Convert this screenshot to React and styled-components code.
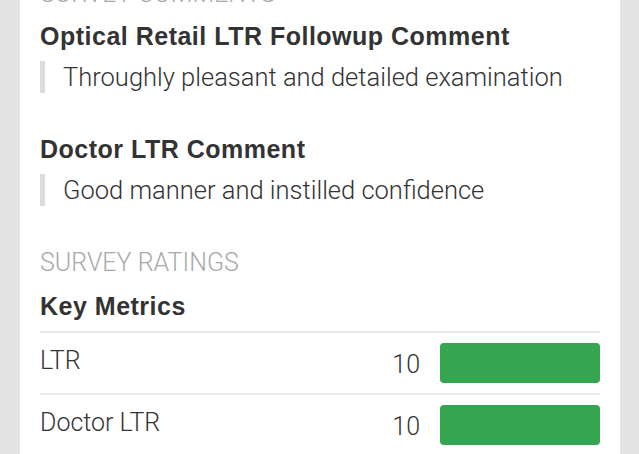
import React from "react";
import styled, { createGlobalStyle } from "styled-components";

const comments = [
  { title: "Optical Retail LTR Followup Comment", text: "Throughly pleasant and detailed examination" },
  { title: "Doctor LTR Comment", text: "Good manner and instilled confidence" },
];

const metrics = [
  { label: "LTR", value: 10, max: 10 },
  { label: "Doctor LTR", value: 10, max: 10 },
];

export default function App() {
  return (
    <Page>
      <GlobalStyle />
      <Card>
        <SectionLabel>Survey Comments</SectionLabel>
        {comments.map((c) => (
          <Comment key={c.title}>
            <Heading>{c.title}</Heading>
            <Quote>{c.text}</Quote>
          </Comment>
        ))}
        <SectionLabel $spaced>Survey Ratings</SectionLabel>
        <Heading $gap={13}>Key Metrics</Heading>
        <MetricList>
          {metrics.map((m) => (
            <MetricRow key={m.label}>
              <MetricLabel>{m.label}</MetricLabel>
              <MetricValue>{m.value}</MetricValue>
              <BarTrack>
                <Bar style={{ width: `${(m.value / m.max) * 100}%` }} />
              </BarTrack>
            </MetricRow>
          ))}
        </MetricList>
      </Card>
    </Page>
  );
}

const GlobalStyle = createGlobalStyle`
  html, body {
    margin: 0;
    background: #e3e3e3;
    overflow: hidden;
  }
`;

const Page = styled.div`
  display: flow-root;
  padding: 0 19px 0 20px;
  height: 454px;
  overflow: hidden;
`;

const Card = styled.div`
  background: #fff;
  margin-top: -21px;
  padding: 0 20px 40px;
  min-height: 100%;
  color: #333;
`;

const SectionLabel = styled.div`
  font-family: Roboto, "Liberation Sans", sans-serif;
  font-weight: 300;
  font-size: 25px;
  line-height: 30px;
  text-transform: uppercase;
  color: #a9a9a9;
  margin-top: ${(p) => (p.$spaced ? "42px" : "0")};
`;

const Comment = styled.div`
  margin-top: 12px;
  & + & {
    margin-top: 41px;
  }
`;

const Heading = styled.h3`
  margin: ${(p) => p.$gap || 0}px 0 0;
  font-family: "Liberation Sans", Arial, sans-serif;
  font-weight: 700;
  font-size: 25px;
  letter-spacing: 0.5px;
  line-height: 30px;
  color: #333;
`;

const Quote = styled.blockquote`
  margin: 10px 0 0;
  padding: 0 0 0 18px;
  border-left: 5px solid #dcdcdc;
  font-family: Roboto, "Liberation Sans", sans-serif;
  font-weight: 300;
  font-size: 25.5px;
  line-height: 32px;
  color: #333;
`;

const MetricList = styled.div`
  margin-top: 10px;
  border-top: 2px solid #ececec;
`;

const MetricRow = styled.div`
  display: flex;
  align-items: flex-start;
  height: 60px;
  border-bottom: 2px solid #ececec;

  &:last-child {
    border-bottom: none;
  }
`;

const MetricLabel = styled.div`
  flex: 1;
  padding-top: 13px;
  font-family: Roboto, "Liberation Sans", sans-serif;
  font-weight: 300;
  font-size: 25px;
  line-height: 30px;
`;

const MetricValue = styled.div`
  margin-right: 20px;
  padding-top: 17px;
  text-align: right;
  font-family: Roboto, "Liberation Sans", sans-serif;
  font-weight: 300;
  font-size: 25px;
  line-height: 30px;
`;

const BarTrack = styled.div`
  width: 160px;
  height: 40px;
  margin-top: 10px;
`;

const Bar = styled.div`
  height: 100%;
  background: #35a552;
  border-radius: 4px;
`;
